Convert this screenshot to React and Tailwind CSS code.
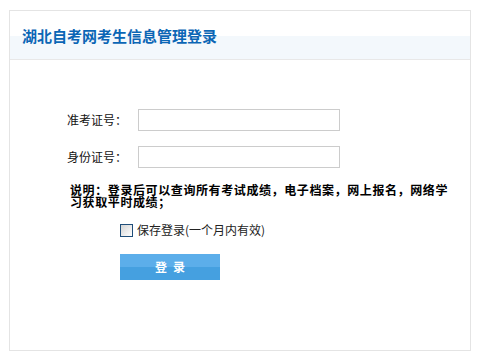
export default function App() {
  const font = { fontFamily: '"Noto Sans CJK SC", "Noto Sans", sans-serif' };
  return (
    <div className="w-[484px] h-[360px] bg-white pt-[10px] pl-[9px]" style={font}>
      <div className="w-[462px] h-[341px] border border-[#e4e4e4] bg-white">
        <div className="h-[49px] border-b border-[#e8e8e8] bg-[linear-gradient(to_bottom,#ffffff_25px,#f3f8fc_25px)] pl-[12px] pt-[17px]">
          <div className="text-[15px] leading-[15px] font-bold text-[#0b66b5]">湖北自考网考生信息管理登录</div>
        </div>
        <div className="pl-[57px] pt-[49px] text-[12px] text-[#111]">
          <div className="flex items-center">
            <div className="w-[60px] text-right leading-[14px]">准考证号：</div>
            <div className="ml-[11px] w-[202px] h-[22px] border border-[#cccccc] bg-white" />
          </div>
          <div className="flex items-center mt-[15px]">
            <div className="w-[60px] text-right leading-[14px]">身份证号：</div>
            <div className="ml-[11px] w-[202px] h-[22px] border border-[#cccccc] bg-white" />
          </div>
          <div className="ml-[3px] mt-[16px] w-[382px] font-bold leading-[12px] tracking-[0.6px] text-black">
            说明：登录后可以查询所有考试成绩，电子档案，网上报名，网络学习获取平时成绩；
          </div>
          <div className="ml-[53px] mt-[15px] flex items-center">
            <div className="w-[13px] h-[13px] border border-[#1f4e7a] bg-[linear-gradient(135deg,#d4d4d4,#ffffff)]" />
            <div className="ml-[4px] leading-[14px] text-[#222]">保存登录(一个月内有效)</div>
          </div>
          <div className="ml-[53px] mt-[17px] w-[100px] h-[26px] bg-[linear-gradient(to_bottom,#5caeea_50%,#45a0e0_50%)] flex items-center justify-center text-white font-bold text-[12px] tracking-[6px] pl-[6px]">
            登录
          </div>
        </div>
      </div>
    </div>
  );
}
